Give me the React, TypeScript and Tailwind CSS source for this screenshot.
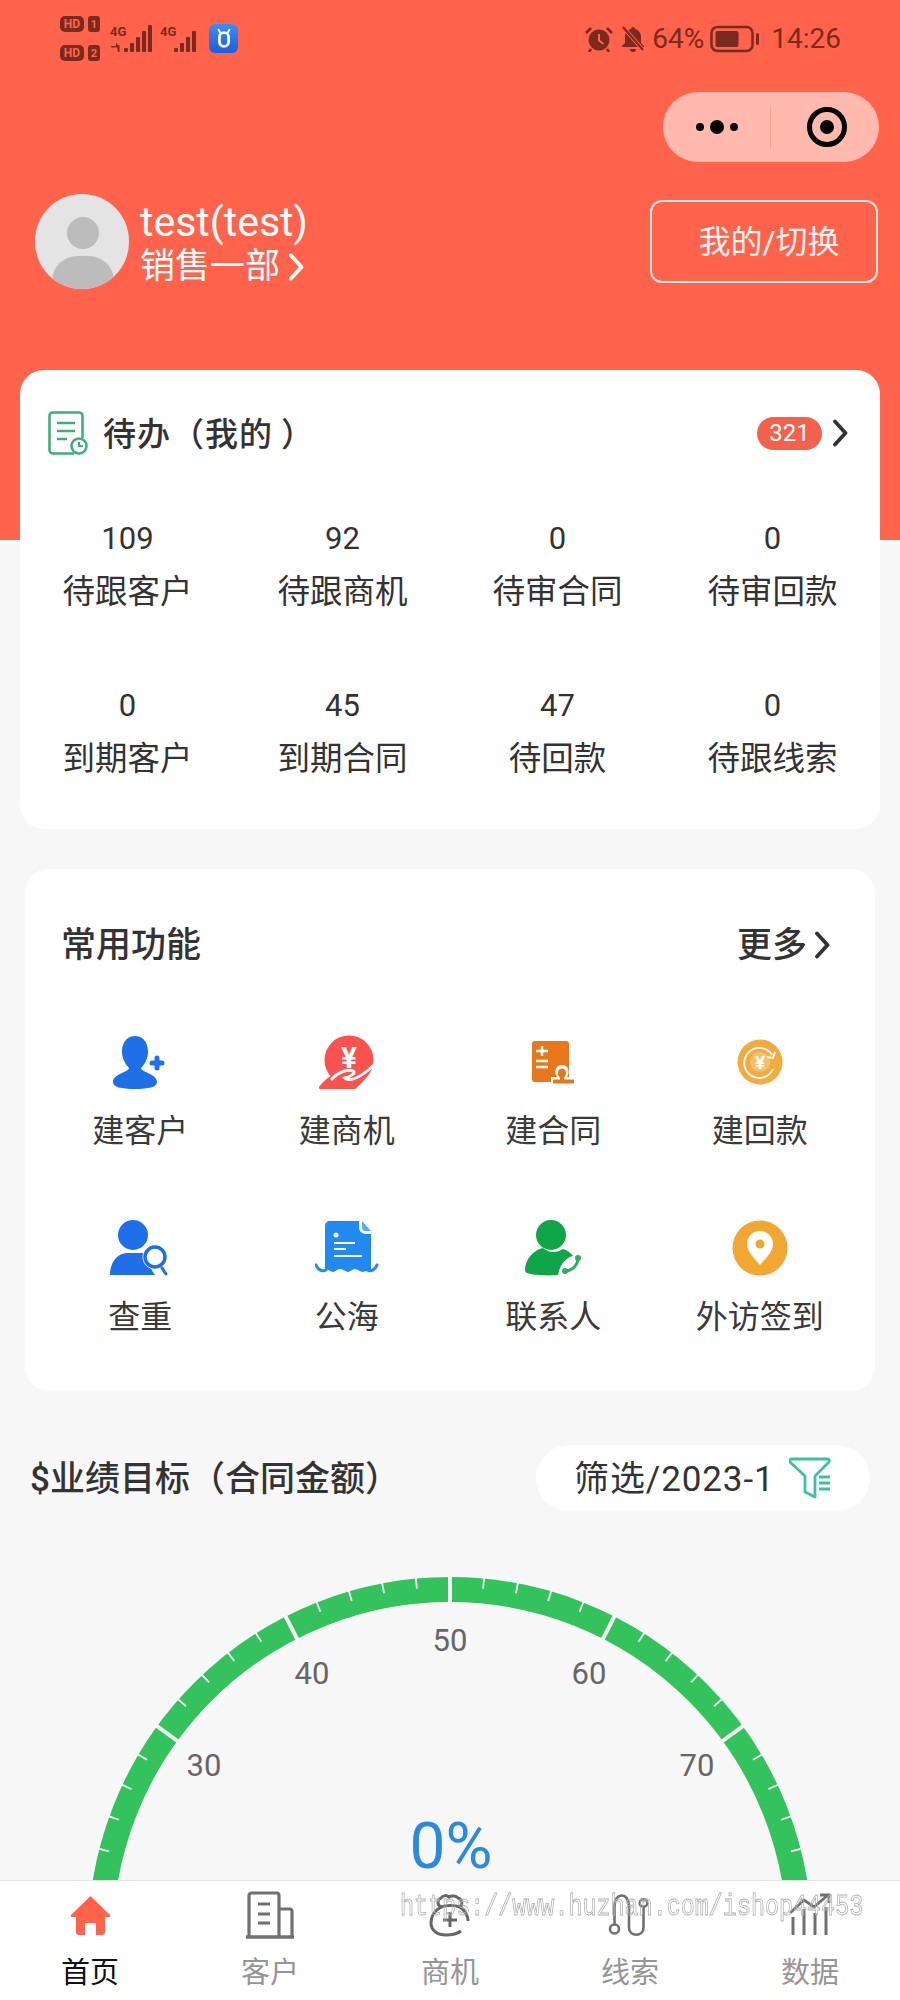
import { ReactNode } from "react";

const todoRows = [
  { value: "109", label: "待跟客户" },
  { value: "92", label: "待跟商机" },
  { value: "0", label: "待审合同" },
  { value: "0", label: "待审回款" },
  { value: "0", label: "到期客户" },
  { value: "45", label: "到期合同" },
  { value: "47", label: "待回款" },
  { value: "0", label: "待跟线索" },
];

function Chevron({ className = "" }: { className?: string }) {
  return (
    <svg viewBox="0 0 16 28" className={className} fill="none" stroke="currentColor" strokeWidth="3.8" strokeLinecap="round" strokeLinejoin="round">
      <path d="M3 2.5 L13.5 14 L3 25.5" />
    </svg>
  );
}

/* ---------- status bar ---------- */
function SimBadge({ n }: { n: string }) {
  return (
    <div className="flex items-center gap-[4px]">
      <span className="flex h-[16px] w-[24px] items-center justify-center rounded-[5px] bg-[#7a2a1e] text-[12px] leading-none font-bold text-[#ff634c]">HD</span>
      <span className="flex h-[16px] w-[12px] items-center justify-center rounded-[3px] bg-[#7a2a1e] text-[11px] leading-none font-bold text-[#ff634c]">{n}</span>
    </div>
  );
}

function Signal({ arrows }: { arrows?: boolean }) {
  return (
    <div className="relative h-[30px] w-[43px]">
      <span className="absolute top-[0px] left-0 text-[13px] leading-[14px] font-bold text-[#7a2a1e]">4G</span>
      <svg viewBox="0 0 43 30" className="absolute inset-0 h-[30px] w-[43px]" fill="#7a2a1e">
        {arrows && <path d="M1 21h5v-3l3 3v5h-1.5v-3.5H1zM8 20h1.5v7H8z" />}
        <rect x="14" y="23" width="4" height="4" rx="1" />
        <rect x="20" y="18" width="4" height="9" rx="1" />
        <rect x="26" y="12" width="4" height="15" rx="1" />
        <rect x="32" y="6" width="4" height="21" rx="1" />
        {arrows && <rect x="38" y="0" width="4" height="27" rx="1" />}
      </svg>
    </div>
  );
}

function StatusBar() {
  return (
    <div className="flex h-[80px] items-start justify-between pt-[16px] pr-[59px] pl-[60px]">
      <div className="flex items-center gap-[5px]">
        <div className="mr-[5px] flex flex-col gap-[13px]">
          <SimBadge n="1" />
          <SimBadge n="2" />
        </div>
        <div className="mt-[2px]">
          <Signal arrows />
        </div>
        <div className="mt-[2px] ml-[2px]">
          <Signal />
        </div>
        <div className="mt-[-1px] ml-[1px] flex h-[29px] w-[29px] items-center justify-center rounded-[6px] bg-gradient-to-b from-[#3f8df2] to-[#1b5fdd]">
          <svg viewBox="0 0 24 24" className="h-[22px] w-[22px]" fill="none" stroke="#fff" strokeWidth="3">
            <path d="M6 3l2 3M18 3l-2 3" strokeWidth="2" strokeLinecap="round" />
            <rect x="7" y="6" width="10" height="15" rx="5" />
          </svg>
        </div>
      </div>
      <div className="mt-[9px] flex items-center text-[#7a2a1e]">
        <svg viewBox="0 0 28 26" className="h-[26px] w-[28px]" fill="currentColor">
          <circle cx="14" cy="14" r="10.5" />
          <path d="M14 8v6.5l4.5 3.5" fill="none" stroke="#ff634c" strokeWidth="2" />
          <path d="M1 7l5-5M27 7l-5-5M6 23l-2 3M22 23l2 3" fill="none" stroke="currentColor" strokeWidth="2.5" />
        </svg>
        <svg viewBox="0 0 24 26" className="ml-[8px] h-[26px] w-[24px]" fill="currentColor">
          <path d="M12 1c1.4 0 2 1 2 2 4 1 6 4 6 8v6l3 3v1H1v-1l3-3v-6c0-4 2-7 6-8 0-1 .6-2 2-2zM9 23h6c0 2-1 3-3 3s-3-1-3-3z" />
          <path d="M2 1l20 23" stroke="#ff634c" strokeWidth="4" />
          <path d="M2 1l20 23" stroke="currentColor" strokeWidth="2" />
        </svg>
        <span className="ml-[7px] text-[28px] leading-none">64%</span>
        <svg viewBox="0 0 50 28" className="ml-[6px] h-[28px] w-[50px]">
          <rect x="1.5" y="2" width="41" height="24" rx="6" fill="none" stroke="currentColor" strokeWidth="2.5" />
          <rect x="5.5" y="6" width="23" height="16" rx="2" fill="currentColor" />
          <rect x="46" y="8" width="3" height="12" rx="1.5" fill="currentColor" />
        </svg>
        <span className="ml-[11px] text-[28px] leading-none">14:26</span>
      </div>
    </div>
  );
}

/* ---------- shortcut icons ---------- */
function IconAddCustomer() {
  return (
    <svg viewBox="0 0 54 54" className="h-[54px] w-[54px]">
      <path d="M22 1c10 0 13 9 13 16 0 8-5 14-7 16 0 4 16 6 16 14 0 5-8 7-22 7S0 52 0 47c0-8 16-10 16-14-2-2-7-8-7-16C9 10 12 1 22 1z" fill="#1e6fe8" />
      <path d="M44 23v10M39 28h10" stroke="#1e6fe8" strokeWidth="5" strokeLinecap="round" />
    </svg>
  );
}

function IconBusiness() {
  return (
    <svg viewBox="0 0 56 55" className="h-[55px] w-[56px]">
      <circle cx="30" cy="25" r="24.5" fill="#f9524f" />
      <text x="30" y="33" textAnchor="middle" fontSize="30" fontWeight="700" fill="#fff" fontFamily="Roboto, sans-serif">¥</text>
      <path d="M0 52c4-6 10-10 16-14l24 2 15-12c-3 10-11 20-19 26H3c-3 0-4-1-3-2z" fill="#f9524f" />
      <path d="M13 44c7-8 17-10 21-8 4 2-4 6-8 7 6 5 18-3 29-13" fill="none" stroke="#fff" strokeWidth="3" strokeLinecap="round" />
    </svg>
  );
}

function IconContract() {
  return (
    <svg viewBox="0 0 44 44" className="h-[44px] w-[44px]">
      <rect x="1" y="1" width="37" height="41" rx="3" fill="#e8761a" />
      <path d="M11 6v10M5 11h12M5 21h12M5 27h12" stroke="#fff" strokeWidth="2.5" />
      <path d="M20 44v-7h6c-3-4-2-12 5-12s8 8 5 12h8v7z" fill="#fff" />
      <path d="M22 43.500v-4h7v-2c-3-2-3-9 2-9s5 7 2 9v2h10v4z" fill="#e8761a" />
    </svg>
  );
}

function IconRepayment() {
  return (
    <svg viewBox="0 0 46 46" className="h-[46px] w-[46px]">
      <circle cx="23" cy="23" r="22.500" fill="#f3ab3f" />
      <path d="M35 16a15 15 0 1 0 1 14" fill="none" stroke="#fff" strokeWidth="1.800" />
      <path d="M30 18l6 1 2-6" fill="none" stroke="#fff" strokeWidth="1.800" />
      <circle cx="23" cy="23" r="10" fill="#fff" fillOpacity="0.25" />
      <text x="23" y="30" textAnchor="middle" fontSize="19" fontWeight="700" fill="#fff" fontFamily="Roboto, sans-serif">¥</text>
    </svg>
  );
}

function IconSearchCustomer() {
  return (
    <svg viewBox="0 0 60 56" className="h-[56px] w-[60px]">
      <circle cx="23" cy="15" r="15" fill="#1e6fe8" />
      <path d="M0 55c0-14 8-22 18-22h14c4 0 6 1 9 3-3 5-1 13 4 19z" fill="#1e6fe8" />
      <circle cx="45" cy="37" r="12.500" fill="#fff" />
      <circle cx="45" cy="37" r="10" fill="#fff" stroke="#1e6fe8" strokeWidth="3.500" />
      <path d="M52 48l4 6" stroke="#1e6fe8" strokeWidth="3" strokeLinecap="round" />
    </svg>
  );
}

function IconSea() {
  return (
    <svg viewBox="0 0 64 54" className="h-[54px] w-[64px]">
      <path d="M10 5c0-3 2-5 5-5h29v6c0 4 3 7 6 7h6v36c-3 0-5 1-8 2-3 0-5-3-8-3s-5 3-7 3-5-3-8-3-5 3-7 3-5-3-8-3z" fill="#2189f0" />
      <path d="M47 0l9 10h-6c-2 0-3-2-3-4z" fill="#2189f0" opacity="0.75" />
      <circle cx="21" cy="14" r="2.500" fill="#fff" />
      <path d="M19 22h21M19 28h12M19 35h28" stroke="#fff" strokeWidth="2" />
      <path d="M1 44c2 5 6 7 10 5M62 44c-2 5-6 7-10 5" fill="none" stroke="#2189f0" strokeWidth="3" strokeLinecap="round" />
    </svg>
  );
}

function IconContact() {
  return (
    <svg viewBox="0 0 56 56" className="h-[56px] w-[56px]">
      <circle cx="26" cy="15" r="15" fill="#0fa64a" />
      <path d="M0 50c0-10 8-20 18-22 6 5 14 5 20 1 4 1 8 4 10 7-8 2-13 9-15 19-13 1-25 0-31-2-2-1-2-2-2-3z" fill="#0fa64a" />
      <path d="M42 51c6-1 10-6 11-11" fill="none" stroke="#2fae63" strokeWidth="3" />
      <circle cx="40" cy="51" r="3" fill="#2fae63" />
      <circle cx="53" cy="38" r="3" fill="#2fae63" />
    </svg>
  );
}

function IconVisit() {
  return (
    <svg viewBox="0 0 56 56" className="h-[56px] w-[56px]">
      <circle cx="28" cy="28" r="27.500" fill="#f3a733" />
      <path d="M28 11c8 0 13 6 13 13 0 8-8 15-13 21-5-6-13-13-13-21 0-7 5-13 13-13z" fill="#fff" />
      <circle cx="28" cy="24" r="4.500" fill="#f3a733" />
    </svg>
  );
}

const shortcuts: { label: string; icon: ReactNode }[] = [
  { label: "建客户", icon: <IconAddCustomer /> },
  { label: "建商机", icon: <IconBusiness /> },
  { label: "建合同", icon: <IconContract /> },
  { label: "建回款", icon: <IconRepayment /> },
  { label: "查重", icon: <IconSearchCustomer /> },
  { label: "公海", icon: <IconSea /> },
  { label: "联系人", icon: <IconContact /> },
  { label: "外访签到", icon: <IconVisit /> },
];

/* ---------- gauge ---------- */
function Gauge() {
  const cx = 450;
  const cy = 1939;
  const outer = 362;
  const inner = 337;
  const point = (value: number, r: number) => {
    const a = (((value - 50) * 2.7) * Math.PI) / 180;
    return { x: cx + r * Math.sin(a), y: cy - r * Math.cos(a) };
  };
  const ticks: number[] = [];
  for (let v = 0; v <= 100; v += 2) ticks.push(v);
  const labels = [
    { v: "30", x: 204, y: 1765 },
    { v: "40", x: 312, y: 1673 },
    { v: "50", x: 450, y: 1640 },
    { v: "60", x: 589, y: 1673 },
    { v: "70", x: 697, y: 1765 },
  ];

  return (
    <div className="relative mt-[59px] h-[310px] w-[900px]">
      <svg viewBox="0 1570 900 310" className="block h-[310px] w-[900px]">
        <circle cx={cx} cy={cy} r={(outer + inner) / 2} fill="none" stroke="#33c25c" strokeWidth={outer - inner} />
        {ticks.map((v) => {
          const major = v % 10 === 0;
          const a = point(v, outer + 1);
          const b = point(v, major ? inner - 1 : outer - 10);
          return <line key={v} x1={a.x} y1={a.y} x2={b.x} y2={b.y} stroke="#f6f8f6" strokeWidth={major ? 4 : 1.8} />;
        })}
        {labels.map((l) => (
          <text key={l.v} x={l.x} y={l.y + 11} textAnchor="middle" fontSize="31" fill="#666">{l.v}</text>
        ))}
      </svg>
      <div className="absolute top-[252px] left-0 w-full pl-[2px] text-center text-[64px] leading-[50px] text-[#2a8ae0]">0%</div>
    </div>
  );
}

/* ---------- bottom tabs ---------- */
function TabHome() {
  return (
    <svg viewBox="0 0 41 40" className="h-[40px] w-[41px]">
      <path d="M20.500 1L40 20c.8 1 .3 2-1 2h-4v15c0 2-1 3-3 3h-6V28h-11v12H9c-2 0-3-1-3-3V22H2c-1.300 0-1.800-1-1-2z" fill="#ff634c" />
    </svg>
  );
}

function TabCustomer() {
  return (
    <svg viewBox="0 0 48 48" className="h-[48px] w-[48px]" fill="none" stroke="#707070" strokeWidth="3.200">
      <path d="M3 46V5c0-2 1-3 3-3h25c1 0 2 1 2 3v41" />
      <path d="M33 18h11c1 0 2 1 2 2v26" />
      <path d="M0 46h48" strokeWidth="3.600" />
      <path d="M12 13h12M12 23h12M12 32h12" />
    </svg>
  );
}

function TabBusiness() {
  return (
    <svg viewBox="0 0 44 44" className="h-[44px] w-[44px]" fill="none" stroke="#666" strokeWidth="3">
      <path d="M13 14c-4-2-4-7 0-9 2-3 6-3 8-1 3-2 7-1 9 1 4 1 5 6 2 9-5-2-14-2-19 0z" />
      <path d="M13 14C6 18 3 24 3 30c0 8 7 12 15 12 6 0 11-1 15-4" />
      <path d="M32 14c4 3 8 8 8 14" />
      <path d="M22 19v15M15 27h14" />
    </svg>
  );
}

function TabClue() {
  return (
    <svg viewBox="0 0 44 44" className="h-[44px] w-[44px]" fill="none" stroke="#707070" strokeWidth="2.600">
      <circle cx="6.500" cy="36" r="4.500" />
      <path d="M6.500 31.500V13c0-14 14.500-14 14.500 0v22c0 9 14.500 9 14.500 0V14" />
      <circle cx="35.500" cy="10" r="3.800" />
    </svg>
  );
}

function TabData() {
  return (
    <svg viewBox="0 0 42 44" className="h-[44px] w-[42px]" fill="none" stroke="#707070">
      <path d="M4 42V24M15 42V16M26 42V20M37 42V14" strokeWidth="3" />
      <path d="M1 20l14-13 10 7L39 2" strokeWidth="2.800" />
      <path d="M31 2h9v8" strokeWidth="2.800" />
    </svg>
  );
}

const tabs: { label: string; icon: ReactNode; active?: boolean }[] = [
  { label: "首页", icon: <TabHome />, active: true },
  { label: "客户", icon: <TabCustomer /> },
  { label: "商机", icon: <TabBusiness /> },
  { label: "线索", icon: <TabClue /> },
  { label: "数据", icon: <TabData /> },
];

export default function App() {
  return (
    <div className="relative h-[2000px] w-[900px] overflow-hidden bg-[#f7f7f7] font-['Roboto','Noto_Sans_CJK_SC',sans-serif] text-[#333]">
      {/* Header band */}
      <div className="h-[540px] bg-[#ff634c] text-white">
        <StatusBar />

        {/* mini program capsule */}
        <div className="mt-[12px] flex justify-end pr-[21px]">
          <div className="flex h-[70px] w-[216px] items-center rounded-full bg-[#ffb9ad]">
            <div className="flex h-[43px] flex-1 items-center justify-center gap-[6px] border-r border-[#f2a497]">
              <span className="h-[8px] w-[8px] rounded-full bg-black" />
              <span className="h-[14px] w-[14px] rounded-full bg-black" />
              <span className="h-[8px] w-[8px] rounded-full bg-black" />
            </div>
            <div className="flex w-[108px] items-center justify-center pl-[4px]">
              <div className="flex h-[40px] w-[40px] items-center justify-center rounded-full border-[5px] border-black">
                <span className="h-[14px] w-[14px] rounded-full bg-black" />
              </div>
            </div>
          </div>
        </div>

        {/* User row */}
        <div className="mt-[32px] flex items-start justify-between pr-[22px] pl-[35px]">
          <div className="flex items-start gap-[11px]">
            <div className="relative h-[95px] w-[94px] overflow-hidden rounded-full bg-[#e4e4e4]">
              <span className="absolute top-[23px] left-[32px] h-[32px] w-[32px] rounded-full bg-[#bcbcbc]" />
              <span className="absolute top-[62px] left-[17px] h-[50px] w-[62px] rounded-full bg-[#bcbcbc]" />
            </div>
            <div className="pt-[7px]">
              <div className="text-[41px] leading-[42px]">test(test)</div>
              <div className="mt-[3px] flex items-center text-[35px] leading-[42px]">
                销售一部
                <Chevron className="ml-[8px] h-[28px] w-[16px]" />
              </div>
            </div>
          </div>
          <button className="mt-[6px] flex h-[83px] w-[228px] items-center justify-center rounded-[12px] border-[2.500px] border-[#ffe9e4] pl-[10px] text-[32px] text-[#fff4f1]">
            我的/切换
          </button>
        </div>
      </div>

      {/* Todo card */}
      <div className="relative mx-[20px] -mt-[170px] h-[459px] rounded-[24px] bg-white pt-[41px]">
        <div className="flex h-[44px] items-center pr-[32px] pl-[28px]">
          <svg viewBox="0 0 40 44" className="h-[44px] w-[40px]" fill="none" stroke="#3fae78" strokeWidth="2.600">
            <path d="M26 42.500H5c-2 0-3.500-1.500-3.500-3.500V5C1.500 3 3 1.500 5 1.500h26c2 0 3.500 1.500 3.500 3.500v22" />
            <path d="M9 12h18M9 20h18M9 28h10" />
            <circle cx="31" cy="35" r="7.500" fill="#fff" />
            <path d="M31 31v4h4" strokeWidth="2" />
          </svg>
          <span className="mt-[2px] ml-[15px] text-[33px] leading-none font-medium tracking-[1px]">
            待办（我的<span className="ml-[8px]">）</span>
          </span>
          <span className="ml-auto flex h-[33px] w-[65px] items-center justify-center rounded-full bg-[#f2614c] text-[24px] leading-none text-white">321</span>
          <Chevron className="ml-[10px] h-[28px] w-[16px] text-[#333]" />
        </div>
        <div className="mt-[64px] grid grid-cols-4 gap-y-[74px]">
          {todoRows.map((item) => (
            <div key={item.label} className="flex flex-col items-center">
              <span className="h-[40px] text-[31px] leading-[40px]">{item.value}</span>
              <span className="mt-[13px] h-[40px] text-[32.500px] leading-[40px]">{item.label}</span>
            </div>
          ))}
        </div>
      </div>

      {/* Shortcuts card */}
      <div className="mx-[25px] mt-[40px] h-[522px] rounded-[24px] bg-white pt-[54px]">
        <div className="flex h-[44px] items-center justify-between pr-[45px] pl-[36px]">
          <span className="text-[35px] leading-none font-medium">常用功能</span>
          <span className="flex items-center text-[35px] leading-none font-medium">
            更多
            <Chevron className="ml-[7px] h-[28px] w-[16px]" />
          </span>
        </div>
        <div className="mt-[65px] grid grid-cols-4 gap-y-[67px] px-[12px]">
          {shortcuts.map((s) => (
            <div key={s.label} className="flex flex-col items-center">
              <div className="flex h-[60px] items-center justify-center">{s.icon}</div>
              <span className="mt-[19px] h-[40px] text-[32px] leading-[40px] text-[#3a3a3a]">{s.label}</span>
            </div>
          ))}
        </div>
      </div>

      {/* Target header */}
      <div className="mt-[54px] flex items-center justify-between pr-[30px] pl-[30px]">
        <span className="mt-[2px] text-[35px] leading-none font-medium">$业绩目标（合同金额）</span>
        <div className="flex h-[66px] w-[334px] items-center rounded-full bg-white pl-[38px]">
          <span className="mt-[2px] text-[35px] leading-none tracking-[0.9px]">筛选/2023-1</span>
          <svg viewBox="0 0 42 42" className="ml-[14px] h-[42px] w-[42px]" fill="none" stroke="#3cc2a0" strokeWidth="2.800" strokeLinejoin="round">
            <path d="M3 2h35c2.500 0 3 2 1.500 3.500L26 19v21l-10-5V19L1.500 5.500C0 4 .5 2 3 2z" />
            <path d="M30 20h11M30 26h11M30 32h11" />
          </svg>
        </div>
      </div>

      <Gauge />

      {/* Bottom tabs */}
      <nav className="fixed bottom-0 left-0 grid h-[120px] w-[900px] grid-cols-5 border-t border-[#e6e6e6] bg-white">
        {tabs.map((t) => (
          <div key={t.label} className="flex flex-col items-center">
            <div className="flex h-[62px] items-center justify-center pt-[6px]">{t.icon}</div>
            <span className={t.active ? "mt-[10px] text-[29px] leading-[40px] text-[#111]" : "mt-[10px] text-[29px] leading-[40px] text-[#959595]"}>{t.label}</span>
          </div>
        ))}
      </nav>

      {/* Site stamp laid over the tab bar */}
      <div className="pointer-events-none fixed top-[1892px] left-[400px] origin-left scale-y-[1.25] font-['Liberation_Mono',monospace] text-[23.400px] leading-[30px] whitespace-nowrap text-transparent [-webkit-text-stroke:0.7px_#b0b0b0]">
        https://www.huzhan.com/ishop44453
      </div>
    </div>
  );
}
